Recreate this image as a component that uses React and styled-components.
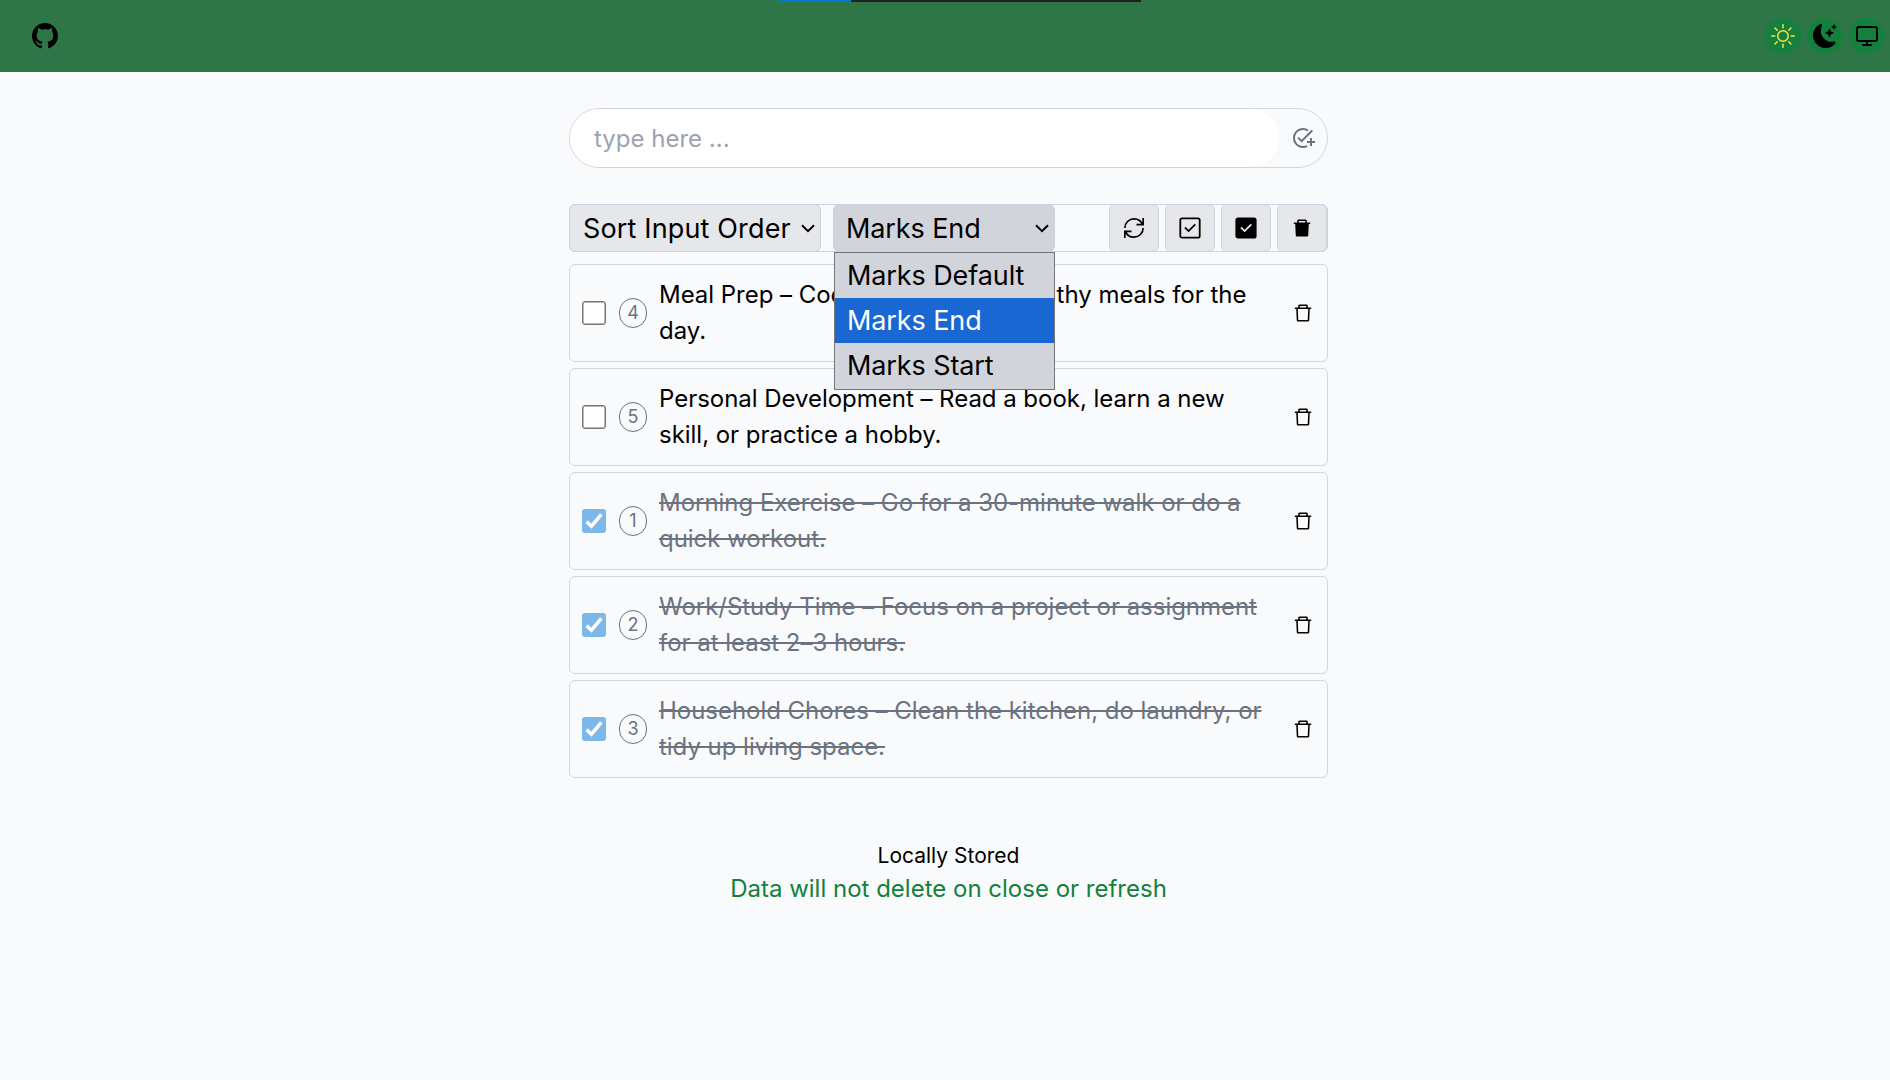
import React from "react";
import styled, { createGlobalStyle, css } from "styled-components";
import { BsGithub, BsMoonStarsFill, BsSun } from "react-icons/bs";
import { FiMonitor } from "react-icons/fi";
import { AiFillDelete, AiOutlineDelete } from "react-icons/ai";
import { MdOutlineAddTask } from "react-icons/md";
import { GrUpdate } from "react-icons/gr";

const GlobalStyle = createGlobalStyle`
  *, *::before, *::after { box-sizing: border-box; }
  body {
    margin: 0;
    min-height: 100vh;
    background: #f9fafc;
    color: #000;
    font-family: Inter, "Liberation Sans", sans-serif;
    font-size: 24px;
    line-height: 36px;
  }
  button { font: inherit; color: inherit; cursor: pointer; }
`;

const Progress = styled.div`
  position: absolute;
  top: 0;
  left: 779px;
  width: 362px;
  height: 2px;
  background: linear-gradient(to right, #0078d7 72px, #202020 72px);
`;

const Header = styled.header`
  display: flex;
  align-items: center;
  justify-content: space-between;
  height: 72px;
  padding: 0 5px 0 32px;
  background: #2e7548;
`;

const HomeLink = styled.a`
  display: flex;
  color: #000;
`;

const Themes = styled.nav`
  display: flex;
  gap: 6px;
`;

const ThemeButton = styled.button`
  display: grid;
  place-items: center;
  width: 36px;
  height: 36px;
  padding: 0;
  border: 0;
  border-radius: 50%;
  background: #15803d;
  color: ${(p) => (p.$active ? "#fde047" : "#000")};
`;

const Main = styled.main`
  width: 759px;
  margin: 36px 0 0 569px;
`;

const Entry = styled.form`
  display: flex;
  height: 60px;
  border: 1px solid #d1d5db;
  border-radius: 30px;
`;

const EntryInput = styled.input`
  width: 709px;
  padding: 2px 24px 0;
  border: 0;
  border-radius: 29px;
  background: #fff;
  font: inherit;
  &::placeholder { color: #9ca3af; opacity: 1; }
`;

const AddButton = styled.button`
  display: grid;
  place-items: center;
  flex: 1;
  padding: 0 1px 0 0;
  border: 0;
  background: none;
  color: #6b7280;
`;

const Toolbar = styled.div`
  display: flex;
  gap: 12px;
  height: 48px;
  margin-top: 36px;
  border: 1px solid #cbd5e1;
  border-radius: 6px;
`;

const SelectWrap = styled.div`
  position: relative;
  margin: -1px 0 -1px ${(p) => (p.$first ? "-1px" : "0")};
`;

const SelectBox = styled.button`
  display: flex;
  align-items: center;
  justify-content: space-between;
  width: ${(p) => p.$width}px;
  height: 48px;
  padding: 1px 5px 0 ${(p) => (p.$open ? 12 : 13)}px;
  border: 1px solid ${(p) => (p.$open ? "#cdd4de" : "#cbd5e1")};
  border-radius: 6px;
  background: ${(p) => (p.$open ? "#d1d5db" : "#e5e7eb")};
  font-size: 27px;
  letter-spacing: ${(p) => (p.$open ? "-0.1px" : "0.15px")};
`;

const Options = styled.ul`
  position: absolute;
  z-index: 2;
  top: 48px;
  left: 1px;
  width: 221px;
  margin: 0;
  padding: 0 0 1px;
  list-style: none;
  border: 1px solid #767676;
  background: #d1d5db;
`;

const Option = styled.li`
  height: 45px;
  padding-left: 12px;
  font-size: 27px;
  line-height: 45px;
  letter-spacing: -0.1px;
  ${(p) => p.$selected && css`
    background: #1967d2;
    color: #fff;
  `}
`;

const Actions = styled.div`
  display: flex;
  gap: 6px;
  margin: -1px 0 -1px auto;
`;

const ActionButton = styled.button`
  display: grid;
  place-items: center;
  width: 50px;
  height: 48px;
  padding: 0;
  border: 1px solid #cbd5e1;
  border-radius: 6px;
  background: #e5e7eb;
`;

const List = styled.ul`
  display: grid;
  gap: 6px;
  margin: 12px 0 0;
  padding: 0;
  list-style: none;
`;

const Item = styled.li`
  display: flex;
  align-items: center;
  height: 98px;
  padding: 0 13px 0 12px;
  border: 1px solid #d1d5db;
  border-radius: 6px;
`;

const CheckBox = styled.span`
  display: grid;
  place-items: center;
  width: 24px;
  height: 24px;
  border: ${(p) => (p.$done ? "0" : "1px solid #767676")};
  box-shadow: ${(p) => (p.$done ? "none" : "inset 0 0 0 0.5px #767676")};
  border-radius: 3px;
  background: ${(p) => (p.$done ? "#7cb8ea" : "#fff")};
`;

const Badge = styled.span`
  display: grid;
  place-items: center;
  width: 28px;
  height: 30px;
  margin: 0 12px 0 13px;
  border: 1px solid #6b7280;
  border-radius: 14px;
  color: #6b7280;
  font-size: 18px;
  line-height: 28px;
`;

const ItemText = styled.p`
  width: 610px;
  margin: 0;
  letter-spacing: -0.03px;
  ${(p) => p.$done && css`
    color: #6b7280;
    text-decoration: line-through;
    text-decoration-thickness: 2px;
  `}
`;

const RemoveButton = styled.button`
  display: flex;
  margin-left: auto;
  padding: 0;
  border: 0;
  background: none;
`;

const Notice = styled.footer`
  margin-top: 63px;
  text-align: center;
`;

const NoticeTitle = styled.p`
  margin: 0;
  font-size: 21px;
  line-height: 30px;
`;

const NoticeText = styled.p`
  margin: 0;
  color: #15803d;
`;

const Chevron = () => (
  <svg width="14" height="9" viewBox="0 0 14 9" fill="none" stroke="#000" strokeWidth="2">
    <path d="M1 1.2 7 7.2 13 1.2" />
  </svg>
);

const Tick = () => (
  <svg width="24" height="24" viewBox="0 0 24 24" fill="none" stroke="#fff" strokeWidth="3.6">
    <path d="M4.6 12.6 9.4 17.2 19.4 5.4" />
  </svg>
);

const SquareCheck = ({ filled }) => (
  <svg width="22" height="22" viewBox="0 0 22 22" fill={filled ? "#000" : "none"} strokeWidth="1.8">
    <rect x="1.3" y="1.3" width="19.4" height="19.4" rx="1.8" stroke="#000" />
    <path d="M6 10.5 9.6 14.1 16.3 7.4" fill="none" stroke={filled ? "#e5e7eb" : "#000"} />
  </svg>
);

const tasks = [
  { n: 4, text: "Meal Prep – Cook and prepare healthy meals for the day." },
  { n: 5, text: "Personal Development – Read a book, learn a new skill, or practice a hobby." },
  { n: 1, done: true, text: "Morning Exercise – Go for a 30-minute walk or do a quick workout." },
  { n: 2, done: true, text: "Work/Study Time – Focus on a project or assignment for at least 2–3 hours." },
  { n: 3, done: true, text: "Household Chores – Clean the kitchen, do laundry, or tidy up living space." },
];

export default function App() {
  return (
    <>
      <GlobalStyle />
      <Progress />
      <Header>
        <HomeLink><BsGithub size={26} /></HomeLink>
        <Themes>
          <ThemeButton $active><BsSun size={24} /></ThemeButton>
          <ThemeButton><BsMoonStarsFill size={24} /></ThemeButton>
          <ThemeButton><FiMonitor size={24} /></ThemeButton>
        </Themes>
      </Header>
      <Main>
        <Entry>
          <EntryInput placeholder="type here ..." />
          <AddButton type="button"><MdOutlineAddTask size={24} /></AddButton>
        </Entry>
        <Toolbar>
          <SelectWrap $first>
            <SelectBox $width={252}>Sort Input Order<Chevron /></SelectBox>
          </SelectWrap>
          <SelectWrap>
            <SelectBox $width={222} $open>Marks End<Chevron /></SelectBox>
            <Options>
              <Option>Marks Default</Option>
              <Option $selected>Marks End</Option>
              <Option>Marks Start</Option>
            </Options>
          </SelectWrap>
          <Actions>
            <ActionButton><GrUpdate size={20} /></ActionButton>
            <ActionButton><SquareCheck /></ActionButton>
            <ActionButton><SquareCheck filled /></ActionButton>
            <ActionButton><AiFillDelete size={22} /></ActionButton>
          </Actions>
        </Toolbar>
        <List>
          {tasks.map((t) => (
            <Item key={t.n}>
              <CheckBox $done={t.done}>{t.done && <Tick />}</CheckBox>
              <Badge>{t.n}</Badge>
              <ItemText $done={t.done}>{t.text}</ItemText>
              <RemoveButton><AiOutlineDelete size={22} /></RemoveButton>
            </Item>
          ))}
        </List>
        <Notice>
          <NoticeTitle>Locally Stored</NoticeTitle>
          <NoticeText>Data will not delete on close or refresh</NoticeText>
        </Notice>
      </Main>
    </>
  );
}
